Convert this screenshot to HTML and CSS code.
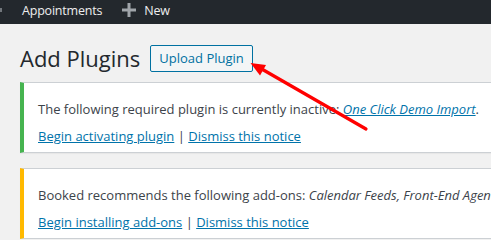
FILE: index.html
```html
<!DOCTYPE html>
<html lang="en">

<head>
  <meta charset="UTF-8">
  <title>Add Plugins</title>
  <link rel="stylesheet" href="styles.css">
</head>

<body>
  <div class="admin-bar">
    <span class="bar-cut"></span>
    <a class="bar-item" href="#">Appointments</a>
    <a class="bar-item bar-new" href="#">
      <svg class="plus" width="14" height="14" viewBox="0 0 14 14">
        <path d="M5.5 0h3v5.5H14v3H8.5V14h-3V8.5H0v-3h5.5z" fill="#a0a5aa"/>
      </svg>
      New
    </a>
  </div>

  <div class="wrap">
    <div class="title-row">
      <h1>Add Plugins</h1>
      <a class="page-action" href="#">Upload Plugin</a>
    </div>

    <div class="notice notice-success">
      <p>The following required plugin is currently inactive: <em><a href="#">One Click Demo Import</a></em>.</p>
      <p><a href="#">Begin activating plugin</a> | <a href="#">Dismiss this notice</a></p>
    </div>

    <div class="notice notice-warning">
      <p>Booked recommends the following add-ons: <em>Calendar Feeds, Front-End Agents, Payments with WooCommerce</em>.</p>
      <p><a href="#">Begin installing add-ons</a> | <a href="#">Dismiss this notice</a></p>
    </div>
  </div>

  <!-- rode pijl naar de upload knop -->
  <svg class="arrow" width="491" height="240" viewBox="0 0 491 240">
    <line x1="366" y1="129" x2="260" y2="68" stroke="#ff0000" stroke-width="3.2" stroke-linecap="round"/>
    <polygon points="250.5,63 266,65 260,75.5" fill="#ff0000"/>
  </svg>
</body>

</html>
```

FILE: styles.css
```css
html {
  overflow: hidden;
}

body {
  margin: 0;
  width: 800px;
  background-color: #f1f1f1;
  color: #3c434a;
  font-family: "Open Sans", "Noto Sans", sans-serif;
  font-size: 13px;
}

a {
  color: #0073aa;
}

/* Donkere balk bovenaan */
.admin-bar {
  height: 24px;
  box-sizing: border-box;
  padding-bottom: 4px;
  background-color: #23282d;
  display: flex;
  align-items: center;
  position: relative;
}

.bar-cut {
  width: 2px;
  height: 4px;
  background-color: #72777c;
  margin-right: 20px;
}

.bar-item {
  color: #eeeeee;
  text-decoration: none;
  font-size: 12.5px;
  letter-spacing: -0.2px;
  display: flex;
  align-items: center;
  margin-right: 20px;
}

.plus {
  margin-right: 8px;
}

.wrap {
  padding: 0 0 0 20px;
}

.title-row {
  display: flex;
  align-items: center;
  height: 58px;
}

h1 {
  margin: 0 10px 0 0;
  font-size: 22px;
  font-weight: 400;
  color: #23282d;
  line-height: 1.3;
  padding-top: 10px;
}

.page-action {
  display: inline-block;
  margin-top: 11px;
  height: 25px;
  line-height: 25px;
  padding: 0 8px;
  border: 1px solid #0071a1;
  border-radius: 2px;
  background-color: #f3f5f6;
  color: #0071a1;
  text-decoration: none;
  font-size: 13px;
}

/* Meldingen */
.notice {
  background-color: white;
  border: 1px solid #ccd0d4;
  border-left-width: 4px;
  box-shadow: 0 1px 1px rgba(0, 0, 0, 0.04);
  padding: 17px 12px 7px 14px;
  margin-top: 0;
  white-space: nowrap;
}

.notice + .notice {
  margin-top: 15px;
}

.notice-success {
  border-left-color: #46b450;
  margin-top: 0;
}

.notice-warning {
  border-left-color: #ffb900;
}

.notice p {
  margin: 0;
  line-height: 18px;
}

.notice p + p {
  margin-top: 9px;
}

.arrow {
  position: absolute;
  top: 0;
  left: 0;
}
```
